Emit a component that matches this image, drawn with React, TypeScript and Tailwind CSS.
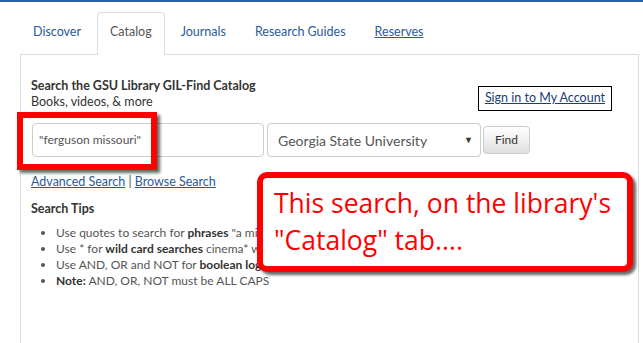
import React from 'react';

const tabs = ['Discover', 'Catalog', 'Journals', 'Research Guides', 'Reserves'];

export default function App() {
  return (
    <div className="relative w-[643px] h-[343px] overflow-hidden bg-white font-['Lato',sans-serif] text-[#555]">
      <div className="h-[2px] bg-[#2f5fa8]" />

      {/* Tabs */}
      <div className="mt-[10px] ml-[20px] flex gap-[3px] text-[12.5px] leading-[20px]">
        {tabs.map((t) => (
          <div
            key={t}
            className={
              t === 'Catalog'
                ? 'px-[12px] pt-[9px] pb-[11px] border border-b-0 border-[#ddd] rounded-t-[4px] text-[#555] -mb-px bg-white relative z-10'
                : 'px-[12px] pt-[9px] pb-[11px] border border-transparent text-[#2a5a9a]'
            }
          >
            <span className={t === 'Reserves' ? 'underline' : ''}>{t}</span>
          </div>
        ))}
      </div>

      {/* Panel */}
      <div className="ml-[20px] w-[619px] h-[291px] border border-[#ddd] px-[10px] pt-[23px]">
        <div className="flex items-end justify-between pr-[16px]">
          <div className="text-[12.5px] leading-[16px]">
            <div className="font-bold text-[#333]">Search the GSU Library GIL-Find Catalog</div>
            <div className="text-[#333]">Books, videos, &amp; more</div>
          </div>
          <div className="mb-[-1px] border border-black px-[6px] h-[25px] flex items-center text-[12.5px] text-[#1a3d7c] underline">
            Sign in to My Account
          </div>
        </div>

        <div className="mt-[13px] flex items-center">
          <div className="ml-px w-[232px] h-[34px] border border-[#ccc] rounded-[4px] flex items-center px-[6px] text-[12px] text-[#555]">
            "ferguson missouri"
          </div>
          <div className="ml-[3px] w-[214px] h-[34px] border border-[#ccc] rounded-[4px] flex items-center justify-between pl-[10px] pr-[7px] text-[14px] text-[#555]">
            <span>Georgia State University</span>
            <span className="text-[9px] text-[#333]">▼</span>
          </div>
          <div className="ml-[2px] w-[47px] h-[28px] border border-[#ccc] rounded-[4px] bg-gradient-to-b from-white to-[#e0e0e0] flex items-center justify-center text-[12px] text-[#333]">
            Find
          </div>
        </div>

        <div className="mt-[17px] text-[12.5px] leading-[16px] text-[#555]">
          <span className="underline text-[#2a5a9a]">Advanced Search</span>
          <span> | </span>
          <span className="underline text-[#2a5a9a]">Browse Search</span>
        </div>

        <div className="mt-[11px] text-[12.5px] leading-[16px] font-bold text-[#333]">Search Tips</div>
        <ul className="mt-[8px] ml-[12px] list-disc pl-[13px] text-[12px] leading-[16px] text-[#555]">
          <li>Use quotes to search for <b className="text-[#333]">phrases</b> "a midsummer night's dream"</li>
          <li>Use * for <b className="text-[#333]">wild card searches</b> cinema* will find cinema, cinemas, cinematic</li>
          <li>Use AND, OR and NOT for <b className="text-[#333]">boolean logic</b></li>
          <li><b className="text-[#333]">Note:</b> AND, OR, NOT must be ALL CAPS</li>
        </ul>
      </div>

      {/* Annotation: red box around the input */}
      <div className="absolute left-[17px] top-[112px] w-[140px] h-[58px] border-[6px] border-[#ff0000] shadow-[3px_3px_3px_rgba(0,0,0,0.6)]" />

      {/* Annotation callout */}
      <div className="absolute left-[257px] top-[172px] w-[376px] h-[100px] bg-white border-[6px] border-[#ff0000] rounded-[10px] shadow-[3px_3px_3px_rgba(0,0,0,0.6)] pl-[11px] pt-[7px] font-['Open_Sans',sans-serif] text-[26.5px] leading-[37px] text-[#ff0000]">
        <div>This search, on the library's</div>
        <div>"Catalog" tab....</div>
      </div>
    </div>
  );
}
